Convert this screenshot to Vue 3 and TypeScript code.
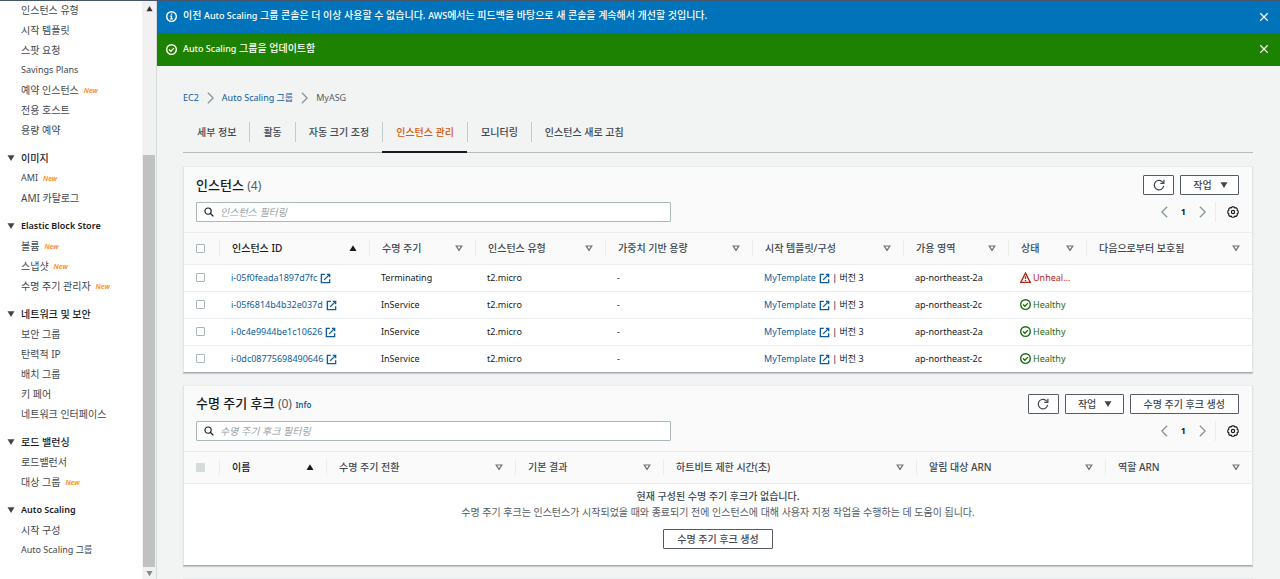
<script setup lang="ts">
import { ref } from 'vue'

interface NavItem { label: string; isNew?: boolean; latin?: boolean }
interface NavGroup { title?: string; latin?: boolean; items: NavItem[] }
interface Column { label: string; sorted?: boolean }

const groups: NavGroup[] = [
  {
    items: [
      { label: '인스턴스 유형' },
      { label: '시작 템플릿' },
      { label: '스팟 요청' },
      { label: 'Savings Plans', latin: true },
      { label: '예약 인스턴스', isNew: true },
      { label: '전용 호스트' },
      { label: '용량 예약' },
    ],
  },
  { title: '이미지', items: [{ label: 'AMI', isNew: true, latin: true }, { label: 'AMI 카탈로그' }] },
  {
    title: 'Elastic Block Store',
    latin: true,
    items: [
      { label: '볼륨', isNew: true },
      { label: '스냅샷', isNew: true },
      { label: '수명 주기 관리자', isNew: true },
    ],
  },
  {
    title: '네트워크 및 보안',
    items: [
      { label: '보안 그룹' },
      { label: '탄력적 IP' },
      { label: '배치 그룹' },
      { label: '키 페어' },
      { label: '네트워크 인터페이스' },
    ],
  },
  { title: '로드 밸런싱', items: [{ label: '로드밸런서' }, { label: '대상 그룹', isNew: true }] },
  {
    title: 'Auto Scaling',
    latin: true,
    items: [{ label: '시작 구성' }, { label: 'Auto Scaling 그룹', latin: true }],
  },
]

const tabs = ['세부 정보', '활동', '자동 크기 조정', '인스턴스 관리', '모니터링', '인스턴스 새로 고침']
const activeTab = ref(3)

const instanceColumns: Column[] = [
  { label: '인스턴스 ID', sorted: true },
  { label: '수명 주기' },
  { label: '인스턴스 유형' },
  { label: '가중치 기반 용량' },
  { label: '시작 템플릿/구성' },
  { label: '가용 영역' },
  { label: '상태' },
  { label: '다음으로부터 보호됨' },
]

const instances = [
  { id: 'i-05f0feada1897d7fc', cycle: 'Terminating', zone: 'ap-northeast-2a', healthy: false },
  { id: 'i-05f6814b4b32e037d', cycle: 'InService', zone: 'ap-northeast-2c', healthy: true },
  { id: 'i-0c4e9944be1c10626', cycle: 'InService', zone: 'ap-northeast-2a', healthy: true },
  { id: 'i-0dc08775698490646', cycle: 'InService', zone: 'ap-northeast-2c', healthy: true },
]

const hookColumns: Column[] = [
  { label: '이름', sorted: true },
  { label: '수명 주기 전환' },
  { label: '기본 결과' },
  { label: '하트비트 제한 시간(초)' },
  { label: '알림 대상 ARN' },
  { label: '역할 ARN' },
]
</script>

<template>
  <div class="page">
    <svg class="sprite" aria-hidden="true">
      <symbol id="i-info" viewBox="0 0 16 16">
        <circle cx="8" cy="8" r="7" fill="none" stroke="currentColor" stroke-width="2" />
        <path d="M8 3.500v2M6 7.500h2v4M6 11.500h4" fill="none" stroke="currentColor" stroke-width="1.800" />
      </symbol>
      <symbol id="i-check" viewBox="0 0 16 16">
        <circle cx="8" cy="8" r="7" fill="none" stroke="currentColor" stroke-width="2" />
        <path d="M4.500 8l2.600 2.600L11.500 6" fill="none" stroke="currentColor" stroke-width="2" />
      </symbol>
      <symbol id="i-warn" viewBox="0 0 16 16">
        <path d="M8 1.500L15 15H1z" fill="none" stroke="currentColor" stroke-width="2" />
        <path d="M8 6v4M8 11.500v2" fill="none" stroke="currentColor" stroke-width="2" />
      </symbol>
      <symbol id="i-close" viewBox="0 0 16 16">
        <path d="M2 2l12 12M14 2L2 14" fill="none" stroke="currentColor" stroke-width="2" />
      </symbol>
      <symbol id="i-external" viewBox="0 0 16 16">
        <path d="M7 2H2v12h12V9M10 2h4v4M14 2L6 10" fill="none" stroke="currentColor" stroke-width="2" />
      </symbol>
      <symbol id="i-search" viewBox="0 0 16 16">
        <circle cx="6.500" cy="6.500" r="5" fill="none" stroke="currentColor" stroke-width="1.800" />
        <path d="M10 10l5 5" fill="none" stroke="currentColor" stroke-width="2" />
      </symbol>
      <symbol id="i-refresh" viewBox="0 0 16 16">
        <path d="M14.200 9.200A6.300 6.300 0 1 1 11.500 2.900L14 5.200" fill="none" stroke="currentColor" stroke-width="1.600" />
        <path d="M14.500 1v4.700H9.800" fill="none" stroke="currentColor" stroke-width="1.600" />
      </symbol>
      <symbol id="i-left" viewBox="0 0 8 16">
        <path d="M7 2L1 8l6 6" fill="none" stroke="currentColor" stroke-width="1.500" />
      </symbol>
      <symbol id="i-right" viewBox="0 0 8 16">
        <path d="M1 2l6 6-6 6" fill="none" stroke="currentColor" stroke-width="1.500" />
      </symbol>
      <symbol id="i-gear" viewBox="0 0 16 16">
        <path d="M6.500 1.200h3l.8 1.500 1.700-.5 1.900 1.900-.5 1.700 1.500.8v3l-1.500.8.5 1.700-1.900 1.900-1.700-.5-.8 1.500h-3l-.8-1.500-1.700.5-1.900-1.900.5-1.700-1.500-.8v-3l1.500-.8-.5-1.700 1.900-1.900 1.700.5z" fill="none" stroke="currentColor" stroke-width="1.500" stroke-linejoin="round" />
        <circle cx="8" cy="8" r="2.200" fill="none" stroke="currentColor" stroke-width="1.500" />
      </symbol>
      <symbol id="i-down" viewBox="0 0 8 8"><path d="M.5 1.200h7L4 7z" fill="currentColor" /></symbol>
      <symbol id="i-up" viewBox="0 0 8 8"><path d="M.5 7h7L4 1.200z" fill="currentColor" /></symbol>
      <symbol id="i-sort" viewBox="0 0 8 8">
        <path d="M1.200 2h5.600L4 6.300z" fill="none" stroke="currentColor" stroke-width="1.200" />
      </symbol>
    </svg>

    <aside class="sidebar">
      <nav class="nav">
        <section v-for="(g, gi) in groups" :key="gi" class="group">
          <h2 v-if="g.title" class="group-title" :class="{ latin: g.latin }">
            <svg class="tri"><use href="#i-down" /></svg>{{ g.title }}
          </h2>
          <ul>
            <li v-for="item in g.items" :key="item.label">
              <a href="#" :class="{ latin: item.latin }">{{ item.label }}</a>
              <span v-if="item.isNew" class="new">New</span>
            </li>
          </ul>
        </section>
      </nav>
      <div class="scrollbar">
        <svg class="arrow"><use href="#i-up" /></svg>
        <div class="thumb"></div>
        <svg class="arrow dim"><use href="#i-down" /></svg>
      </div>
    </aside>

    <div class="main">
      <div class="flash info">
        <svg class="ic11"><use href="#i-info" /></svg>
        <p>이전 <span class="latin">Auto Scaling</span> 그룹 콘솔은 더 이상 사용할 수 없습니다. <span class="latin">AWS</span>에서는 피드백을 바탕으로 새 콘솔을 계속해서 개선할 것입니다.</p>
        <button type="button" aria-label="닫기"><svg class="ic10"><use href="#i-close" /></svg></button>
      </div>
      <div class="flash success">
        <svg class="ic11"><use href="#i-check" /></svg>
        <p><span class="latin">Auto Scaling</span> 그룹을 업데이트함</p>
        <button type="button" aria-label="닫기"><svg class="ic10"><use href="#i-close" /></svg></button>
      </div>

      <main class="content">
        <nav class="crumbs">
          <a href="#">EC2</a>
          <svg class="chev"><use href="#i-right" /></svg>
          <a href="#">Auto Scaling 그룹</a>
          <svg class="chev"><use href="#i-right" /></svg>
          <span>MyASG</span>
        </nav>

        <div class="tabs" role="tablist">
          <button
            v-for="(t, i) in tabs"
            :key="t"
            type="button"
            role="tab"
            :aria-selected="i === activeTab"
            :class="{ active: i === activeTab }"
            @click="activeTab = i"
          ><span>{{ t }}</span></button>
        </div>

        <section class="panel">
          <header class="panel-head">
            <div class="title-row">
              <h1>인스턴스 <span>(4)</span></h1>
              <div class="actions">
                <button type="button" class="btn icon" aria-label="새로 고침"><svg class="ic12"><use href="#i-refresh" /></svg></button>
                <button type="button" class="btn menu">작업<svg class="tri"><use href="#i-down" /></svg></button>
              </div>
            </div>
            <div class="filter-row">
              <label class="search">
                <svg class="ic10"><use href="#i-search" /></svg>
                <input type="text" placeholder="인스턴스 필터링" aria-label="인스턴스 필터링" />
              </label>
              <div class="pager">
                <button type="button" aria-label="이전"><svg class="chev"><use href="#i-left" /></svg></button>
                <b>1</b>
                <button type="button" aria-label="다음"><svg class="chev"><use href="#i-right" /></svg></button>
                <button type="button" class="gear" aria-label="설정"><svg class="ic12"><use href="#i-gear" /></svg></button>
              </div>
            </div>
          </header>
          <table class="instances">
            <colgroup>
              <col class="w-check" /><col class="w-id" /><col class="w-cycle" /><col class="w-type" />
              <col class="w-weight" /><col class="w-template" /><col class="w-zone" /><col class="w-state" /><col />
            </colgroup>
            <thead>
              <tr>
                <th class="check"><input type="checkbox" aria-label="모두 선택" /></th>
                <th v-for="c in instanceColumns" :key="c.label">
                  <div class="th" :class="{ sorted: c.sorted }">
                    {{ c.label }}<svg class="tri"><use :href="c.sorted ? '#i-up' : '#i-sort'" /></svg>
                  </div>
                </th>
              </tr>
            </thead>
            <tbody>
              <tr v-for="r in instances" :key="r.id">
                <td class="check"><input type="checkbox" :aria-label="r.id" /></td>
                <td><a href="#">{{ r.id }}<svg class="ext"><use href="#i-external" /></svg></a></td>
                <td>{{ r.cycle }}</td>
                <td>t2.micro</td>
                <td>-</td>
                <td><a href="#">MyTemplate<svg class="ext"><use href="#i-external" /></svg></a> | 버전 3</td>
                <td>{{ r.zone }}</td>
                <td>
                  <span class="state" :class="r.healthy ? 'ok' : 'bad'">
                    <svg class="ic11"><use :href="r.healthy ? '#i-check' : '#i-warn'" /></svg>{{ r.healthy ? 'Healthy' : 'Unheal…' }}
                  </span>
                </td>
                <td></td>
              </tr>
            </tbody>
          </table>
        </section>

        <section class="panel">
          <header class="panel-head">
            <div class="title-row">
              <h1>수명 주기 후크 <span>(0)</span> <a href="#">Info</a></h1>
              <div class="actions">
                <button type="button" class="btn icon" aria-label="새로 고침"><svg class="ic12"><use href="#i-refresh" /></svg></button>
                <button type="button" class="btn menu">작업<svg class="tri"><use href="#i-down" /></svg></button>
                <button type="button" class="btn">수명 주기 후크 생성</button>
              </div>
            </div>
            <div class="filter-row">
              <label class="search">
                <svg class="ic10"><use href="#i-search" /></svg>
                <input type="text" placeholder="수명 주기 후크 필터링" aria-label="수명 주기 후크 필터링" />
              </label>
              <div class="pager">
                <button type="button" aria-label="이전"><svg class="chev"><use href="#i-left" /></svg></button>
                <b>1</b>
                <button type="button" aria-label="다음"><svg class="chev"><use href="#i-right" /></svg></button>
                <button type="button" class="gear" aria-label="설정"><svg class="ic12"><use href="#i-gear" /></svg></button>
              </div>
            </div>
          </header>
          <table class="hooks">
            <colgroup>
              <col class="w-check" /><col class="w-name" /><col class="w-transition" /><col class="w-result" />
              <col class="w-heartbeat" /><col class="w-target" /><col />
            </colgroup>
            <thead>
              <tr>
                <th class="check"><input type="checkbox" disabled aria-label="모두 선택" /></th>
                <th v-for="c in hookColumns" :key="c.label">
                  <div class="th" :class="{ sorted: c.sorted }">
                    {{ c.label }}<svg class="tri"><use :href="c.sorted ? '#i-up' : '#i-sort'" /></svg>
                  </div>
                </th>
              </tr>
            </thead>
          </table>
          <div class="empty">
            <strong>현재 구성된 수명 주기 후크가 없습니다.</strong>
            <p>수명 주기 후크는 인스턴스가 시작되었을 때와 종료되기 전에 인스턴스에 대해 사용자 지정 작업을 수행하는 데 도움이 됩니다.</p>
            <button type="button" class="btn">수명 주기 후크 생성</button>
          </div>
        </section>
        <section class="panel"><header class="panel-head"></header></section>
      </main>
    </div>
  </div>
</template>

<style>
html, body { overflow: hidden; }
</style>

<style scoped>
* { box-sizing: border-box; margin: 0; padding: 0; }
.page {
  display: flex;
  height: 100vh;
  overflow: hidden;
  border-top: 1px solid #45566b;
  background: #f2f3f3;
  color: #16191f;
  font: 10px/20px "Noto Sans", "Noto Sans CJK KR", sans-serif;
}
.sprite { position: absolute; width: 0; height: 0; }
svg { flex: none; display: block; }
button, input { font: inherit; color: inherit; }
button { background: none; border: 0; cursor: pointer; }
a { color: #0e5c9c; text-decoration: none; }
ul { list-style: none; }
.ic10 { width: 10px; height: 10px; }
.ic11 { width: 11px; height: 11px; }
.ic12 { width: 12px; height: 12px; }
.tri { width: 8px; height: 8px; }
.chev { width: 7px; height: 14px; color: #879596; }
.latin { font-size: 9px; }

.sidebar { display: flex; flex: none; width: 157px; background: #fff; border-right: 1px solid #d5dbdb; }
.nav { flex: 1; margin-top: -1px; color: #414750; }
.group + .group { margin-top: 8px; }
.group-title { display: flex; align-items: center; gap: 6px; padding-left: 7px; font-size: 10px; font-weight: 500; color: #16191f; }
.group-title.latin { font-size: 9px; font-weight: 600; }
.group-title .tri { color: #414750; }
.group li { display: flex; align-items: center; gap: 5px; padding-left: 21px; height: 20px; }
.group li a { color: #414750; white-space: nowrap; }
.new { color: #ff8a14; font-size: 7px; font-weight: 600; font-style: italic; padding-top: 2px; }
.scrollbar { display: flex; flex-direction: column; align-items: center; flex: none; width: 14px; background: #f1f1f1; padding: 4px 1px 2px; }
.scrollbar .arrow { width: 7px; height: 7px; color: #333; }
.scrollbar .dim { color: #888; }
.thumb { width: 100%; flex: none; height: 72%; margin-top: auto; margin-bottom: 3px; background: #c1c1c1; }

.main { flex: 1; min-width: 0; }
.flash { display: flex; align-items: center; height: 33px; padding: 0 11px 3px 9px; color: #fff; font-weight: 500; }
.flash.info { background: #0073bb; height: 32px; }
.flash.success { background: #1d8102; }
.flash p { flex: 1; margin-left: 6px; white-space: nowrap; }
.flash > svg, .flash button { margin-top: 2px; }
.flash button { display: flex; }

.content { padding: 22px 27px 0 26px; }
.crumbs { display: flex; align-items: center; gap: 8px; color: #545b64; font-size: 9px; }
.tabs { display: flex; margin-top: 14px; border-bottom: 1px solid #b5bcbd; }
.tabs button { padding: 0 0 10px; height: 31px; color: #414750; font-weight: 500; border-bottom: 2px solid transparent; margin-bottom: -1px; }
.tabs button span { display: block; padding: 0 13px; line-height: 20px; border-left: 1px solid #c3cbcb; }
.tabs button:first-child span { border-left-color: transparent; }
.tabs .active { color: #d45b07; border-bottom-color: #16191f; }

.panel { margin-top: 13px; background: #fff; border: 1px solid #e3e6e6; border-top-color: #eaeded; border-bottom-color: #a3acb0; box-shadow: 0 1px 1px #c9cfd1; }
.panel + .panel { margin-top: 12px; }
.panel-head { background: #fafafa; padding: 8px 13px 10px 12px; border-bottom: 1px solid #eaeded; }
.title-row, .filter-row { display: flex; align-items: center; justify-content: space-between; }
.title-row { height: 20px; }
.title-row h1 { font-size: 13px; font-weight: 500; }
.title-row h1 span { font-weight: 400; font-size: 12px; color: #545b64; }
.title-row h1 a { font-size: 8px; font-weight: 600; }
.filter-row { margin-top: 7px; }
.actions { display: flex; gap: 6px; }
.btn { display: inline-flex; align-items: center; justify-content: center; height: 20px; padding: 0 13px; border: 1px solid #545b64; border-radius: 1px; background: #fff; color: #414750; font-weight: 500; line-height: 16px; white-space: nowrap; }
.btn.icon { width: 31px; padding: 0; }
.btn.menu { gap: 8px; padding: 0 11px 0 13px; width: 59px; }
.search { display: flex; align-items: center; gap: 6px; width: 475px; height: 20px; padding: 0 7px; border: 1px solid #aab7b8; border-radius: 1px; background: #fff; }
.search input { flex: 1; min-width: 0; height: 18px; border: 0; outline: 0; background: none; }
.search input::placeholder { color: #95a1a2; font-style: italic; opacity: 1; }
.pager { display: flex; align-items: center; height: 20px; font-size: 9px; }
.pager b { margin: 0 13px; }
.pager button { display: flex; align-items: center; }
.pager .gear { height: 20px; border-left: 1px solid #eaeded; margin-left: 9px; padding-left: 11px; }

table { width: 100%; table-layout: fixed; border-collapse: collapse; }
.w-check { width: 35px; }
.w-id { width: 150px; }
.w-cycle { width: 106px; }
.w-type { width: 130px; }
.w-weight { width: 147px; }
.w-template { width: 151px; }
.w-zone { width: 105px; }
.w-state { width: 78px; }
.w-name { width: 107px; }
.w-transition { width: 189px; }
.w-result { width: 148px; }
.w-heartbeat { width: 253px; }
.w-target { width: 189px; }
thead tr { background: #fafafa; height: 31px; border-bottom: 1px solid #eaeded; }
th { font-weight: 500; color: #414750; text-align: left; }
.th { display: flex; align-items: center; justify-content: space-between; height: 16px; padding: 0 12px; border-left: 1px solid #eaeded; white-space: nowrap; }
.th .tri { color: #687078; }
.th.sorted, .th.sorted .tri { color: #16191f; }
td { height: 27px; padding-left: 12px; font-size: 9px; white-space: nowrap; vertical-align: middle; }
tbody tr + tr td { border-top: 1px solid #eaeded; }
.ext { display: inline-block; width: 11px; height: 11px; margin-left: 3px; vertical-align: -3px; }
.check { padding-left: 12px; }
.check input { display: block; appearance: none; width: 9px; height: 9px; border: 1px solid #aab7b8; border-radius: 1px; background: #fff; }
.check input:disabled { background: #d5dbdb; border-color: #d5dbdb; }
.state { display: flex; align-items: center; gap: 2px; }
.ok { color: #1d6b10; }
.bad { color: #b3261a; }

.empty { display: flex; flex-direction: column; align-items: center; padding: 4px 0 16px; line-height: 16px; color: #545b64; }
.empty strong { font-weight: 500; color: #414750; }
.empty .btn { margin-top: 9px; }
</style>
